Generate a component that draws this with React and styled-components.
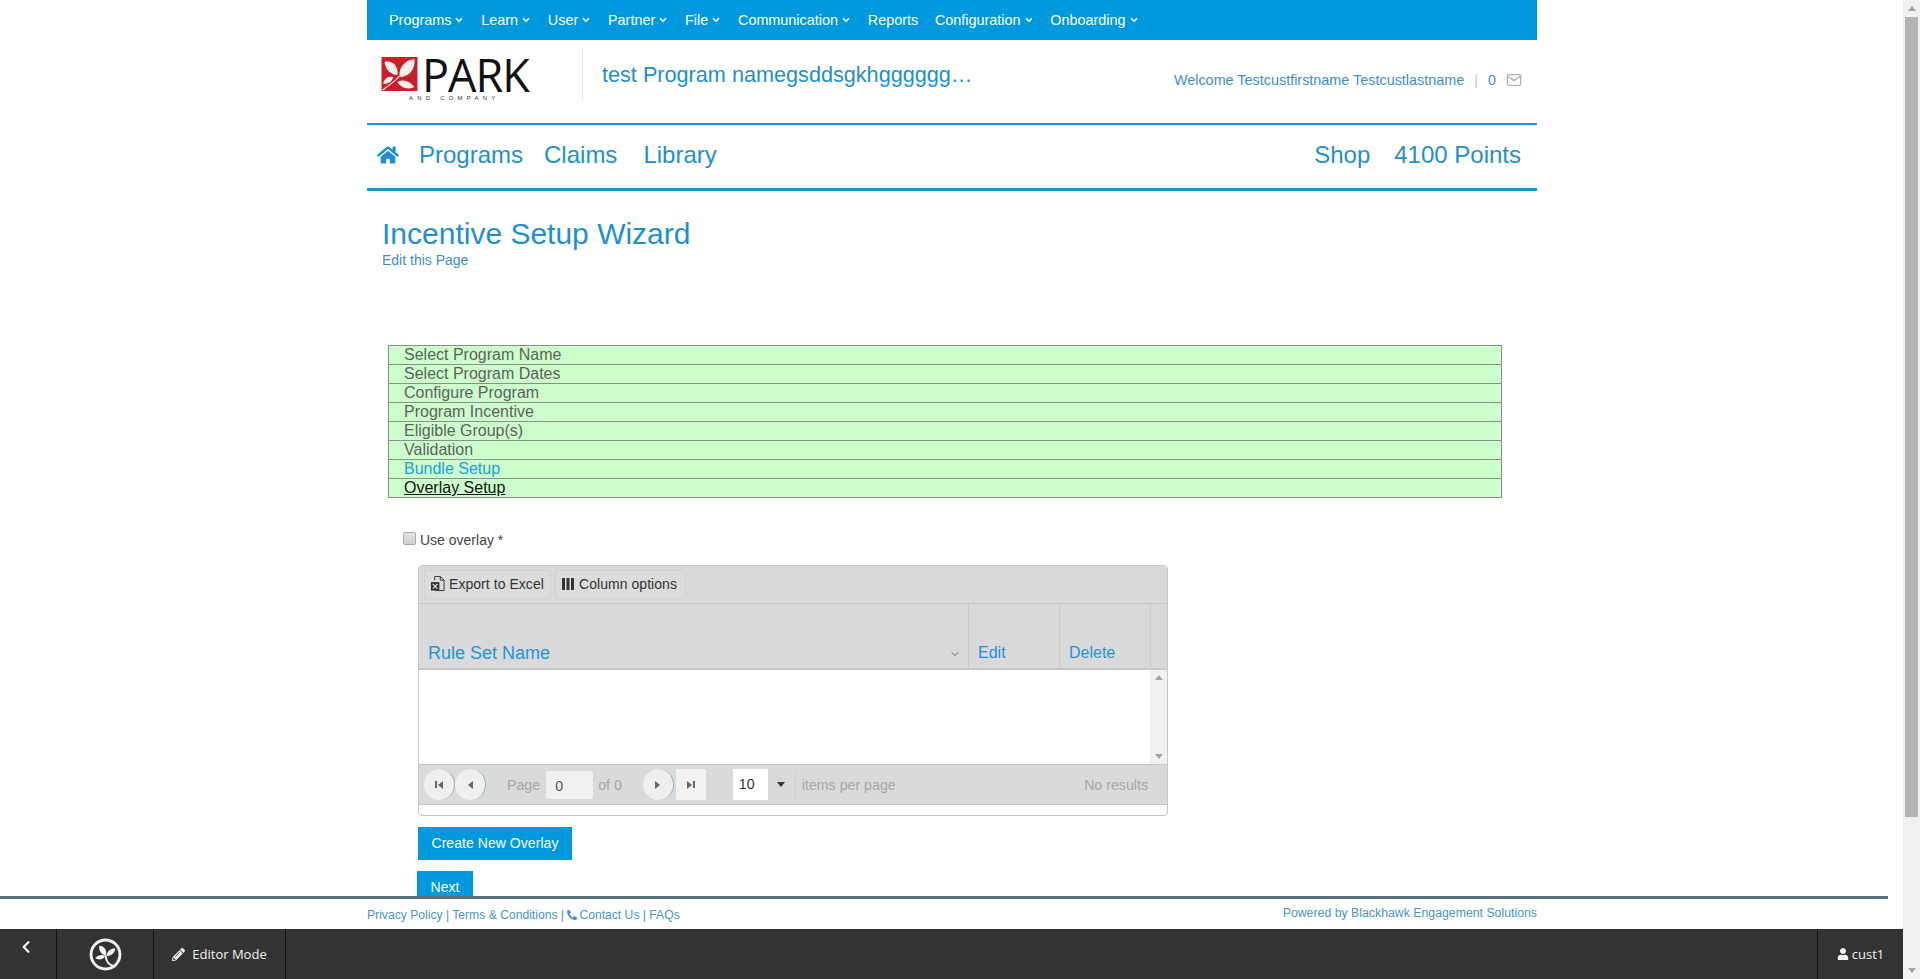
import React from 'react'
import styled, { createGlobalStyle } from 'styled-components'
import { FaHome, FaPencilAlt, FaUser, FaChevronLeft, FaPhone } from 'react-icons/fa'
import { FiMail, FiChevronDown } from 'react-icons/fi'

const BLUE = '#0099de'
const LINK = '#1f8fcf'

const GlobalStyle = createGlobalStyle`
	html, body {
		margin: 0;
		padding: 0;
		height: 100%;
		overflow: hidden;
		background: #fff;
		font-family: "Liberation Sans", Arial, sans-serif;
	}
	* { box-sizing: border-box; }
`

const Page = styled.div`
	width: 1170px;
	margin-left: 367px;
`

const TopNav = styled.nav`
	height: 40px;
	background: ${BLUE};
	display: flex;
	align-items: center;
	padding-left: 22px;
	gap: 16.8px;
	color: #fff;
	font-size: 14.4px;
`

const TopItem = styled.span`
	display: inline-flex;
	align-items: center;
	gap: 3px;
	svg { stroke-width: 4; }
`

const Brand = styled.header`
	height: 85px;
	display: flex;
	border-bottom: 2px solid #1b93d1;
`

const LogoBox = styled.div`
	width: 215px;
	padding: 17px 0 0 14px;
	flex: none;
`

const LogoRow = styled.div`
	display: flex;
	align-items: flex-start;
	gap: 4px;
	height: 35px;
`

const Wordmark = styled.span`
	font-family: "Open Sans", sans-serif;
	font-weight: 400;
	font-size: 45px;
	line-height: 35px;
	letter-spacing: -1px;
	color: #111;
`

const LogoSub = styled.div`
	margin: 3px 0 0 28px;
	font-size: 6px;
	line-height: 7px;
	letter-spacing: 4.2px;
	color: #333;
`

const ProgramTitle = styled.div`
	width: 396px;
	flex: none;
	margin-top: 8px;
	height: 52px;
	border-left: 1px solid #e3e3e3;
	padding: 15px 0 0 19px;
	font-size: 21.65px;
	line-height: 24px;
	color: ${LINK};
	white-space: nowrap;
`

const Welcome = styled.div`
	flex: 1;
	display: flex;
	justify-content: flex-end;
	align-items: center;
	height: 22px;
	margin-top: 29px;
	padding-right: 15px;
	font-size: 14.4px;
	color: #3f8fc7;
`

const Pipe = styled.span`
	margin: 0 10px;
	color: #b9cbd8;
`

const MailIcon = styled(FiMail)`
	margin-left: 10px;
	width: 16px;
	height: 16px;
	color: #b4b4b4;
`

const MainNav = styled.nav`
	height: 66px;
	display: flex;
	align-items: center;
	padding: 0 16px 4px 10px;
	border-bottom: 3px solid #1b93d1;
	font-size: 24px;
	color: ${LINK};
`

const NavLink = styled.span`
	margin-left: ${p => p.$gap}px;
`

const Spacer = styled.div`
	flex: 1;
`

const Heading = styled.div`
	padding: 25px 0 0 15px;
`

const Title = styled.h1`
	margin: 0;
	font-size: 30px;
	font-weight: 400;
	line-height: 36px;
	color: ${LINK};
`

const EditLink = styled.div`
	font-size: 14px;
	line-height: 16px;
	color: #3f8fc7;
`

const Steps = styled.ol`
	list-style: none;
	margin: 77px 0 0 21px;
	padding: 0;
	width: 1114px;
	border: 1px solid #8a8f8a;
`

const Step = styled.li`
	height: 19px;
	background: #ccffcc;
	padding-left: 15px;
	font-size: 16px;
	line-height: 18px;
	color: ${p => p.$link ? '#1ba0d8' : p.$current ? '#111' : '#5f5f5f'};
	text-decoration: ${p => p.$current ? 'underline' : 'none'};
	border-bottom: 1px solid #8a8f8a;
	&:last-child { height: 18px; border-bottom: 0; }
`

const Check = styled.label`
	display: flex;
	align-items: center;
	margin: 34px 0 0 36px;
	height: 16px;
	font-size: 14px;
	color: #444;
`

const CheckBox = styled.span`
	width: 13px;
	height: 13px;
	margin: 0 4px 4px 0;
	border: 1px solid #a9a9a9;
	border-radius: 2px;
	background: linear-gradient(#e4e4e4, #cfcfcf);
`

const Grid = styled.section`
	width: 750px;
	height: 251px;
	margin: 17px 0 0 51px;
	border: 1px solid #c8c8c8;
	border-radius: 4px;
	overflow: hidden;
`

const Toolbar = styled.div`
	height: 38px;
	background: #dadada;
	border-bottom: 1px solid #c8c8c8;
	display: flex;
	align-items: center;
	padding-left: 5px;
	gap: 4px;
`

const ToolButton = styled.span`
	height: 29px;
	width: ${p => p.$w}px;
	padding: 0 0 2px 5px;
	display: inline-flex;
	align-items: center;
	gap: 4px;
	background: #dcdcdc;
	border: 1px solid #d2d2d2;
	border-radius: 3px;
	font-size: 14px;
	letter-spacing: 0.05px;
	color: #333;
`

const HeaderRow = styled.div`
	height: 66px;
	display: grid;
	grid-template-columns: 550px 91px 91px 1fr;
	background: #dadada;
	border-bottom: 2px solid #c8c8c8;
`

const HeaderCell = styled.div`
	display: flex;
	align-items: flex-end;
	justify-content: space-between;
	padding: 0 7px 5px 9px;
	font-size: ${p => p.$size || 16}px;
	line-height: 20px;
	color: #2593d3;
	border-right: 1px solid #cbcbcb;
	svg { color: #666; margin-bottom: 3px; }
`

const Body = styled.div`
	height: 94px;
	display: flex;
	justify-content: flex-end;
	background: #fff;
`

const MiniScroll = styled.div`
	width: 17px;
	background: #f1f1f1;
	display: flex;
	flex-direction: column;
	justify-content: space-between;
	align-items: center;
	padding: 5px 0;
`

const Arrow = styled.span`
	width: 0;
	height: 0;
	border-left: 4px solid transparent;
	border-right: 4px solid transparent;
	border-${p => p.$down ? 'top' : 'bottom'}: 5px solid ${p => p.$color || '#a3a3a3'};
`

const Pager = styled.div`
	height: 41px;
	background: #dadada;
	border-top: 1px solid #c8c8c8;
	border-bottom: 1px solid #c8c8c8;
	display: flex;
	align-items: center;
	padding: 0 19px 0 5px;
	font-size: 14.2px;
	color: #a6a6a6;
`

const RoundButton = styled.span`
	width: 31px;
	height: 31px;
	margin: 0 ${p => p.$mr || 0}px 0 ${p => p.$ml || 0}px;
	flex: none;
	border-radius: 50%;
	background: #efefef;
	border-right: 1px solid #8fb0c8;
	display: flex;
	align-items: center;
	justify-content: center;
	gap: 1px;
`

const SquareButton = styled(RoundButton)`
	width: 30px;
	border-radius: 0;
	border: 0;
	background: #f2f2f2;
`

const TickBar = styled.span`
	width: 2px;
	height: 7px;
	background: #666;
`

const SideArrow = styled.span`
	width: 0;
	height: 0;
	border-top: 4px solid transparent;
	border-bottom: 4px solid transparent;
	border-${p => p.$left ? 'right' : 'left'}: 5px solid #666;
`

const PageInput = styled.span`
	width: 47px;
	height: 28px;
	margin: 0 5px 0 6px;
	flex: none;
	background: #f1f1f1;
	border-radius: 2px;
	color: #555;
	padding-left: 9px;
	line-height: 30px;
`

const SizeSelect = styled.span`
	display: flex;
	width: 63px;
	height: 31px;
	margin: 0 6px 0 27px;
	flex: none;
	border-right: 1px solid #cfcfcf;
`

const SizeValue = styled.span`
	width: 35px;
	background: #fff;
	color: #333;
	padding-left: 6px;
	line-height: 31px;
`

const SizeArrow = styled.span`
	flex: 1;
	display: flex;
	align-items: center;
	justify-content: center;
`

const Primary = styled.button`
	display: block;
	height: ${p => p.$h}px;
	margin: ${p => p.$mt}px 0 0 ${p => p.$ml}px;
	padding: 0 13.5px 1px;
	border: 0;
	background: ${BLUE};
	color: #fff;
	font-family: inherit;
	font-size: 14px;
	letter-spacing: 0.05px;
`

const FixedFooter = styled.footer`
	position: fixed;
	left: 0;
	right: 17px;
	bottom: 0;
	background: #fff;
`

const FooterRule = styled.div`
	height: 3px;
	margin-right: 15px;
	background: #5d6f7b;
`

const FooterLinks = styled.div`
	height: 30px;
	width: 1170px;
	margin-left: 367px;
	display: flex;
	justify-content: space-between;
	font-size: 12.3px;
	color: #4a94c9;
	padding-top: 7px;
	line-height: 14px;
`

const FooterLeft = styled.span`
	padding-top: 2px;
	font-size: 12.15px;
`

const PhoneIcon = styled(FaPhone)`
	width: 10px;
	height: 10px;
	margin-right: 2px;
	transform: scaleX(-1);
	vertical-align: -1px;
`

const DarkBar = styled.div`
	height: 50px;
	background: #333;
	display: flex;
	color: #f2f2f2;
`

const DarkCell = styled.div`
	width: ${p => p.$w}px;
	display: flex;
	align-items: center;
	justify-content: center;
	gap: 7px;
	border-right: 1px solid #111;
	font-family: "Open Sans", sans-serif;
	font-size: 13px;
`

const BackCell = styled(DarkCell)`
	align-items: flex-start;
	padding: 11px 4px 0 0;
`

const UserCell = styled(DarkCell)`
	margin-left: auto;
	border-right: 0;
	border-left: 1px solid #111;
	gap: 3px;
`

const WindowScroll = styled.aside`
	position: fixed;
	top: 0;
	right: 0;
	bottom: 0;
	width: 17px;
	background: #f1f1f1;
	display: flex;
	flex-direction: column;
	align-items: center;
	justify-content: space-between;
	padding: 6px 0;
`

const WindowThumb = styled.span`
	position: absolute;
	top: 17px;
	left: 2px;
	width: 13px;
	height: 800px;
	background: #b4b4b4;
`

const Logo = () => (
	<svg width="37" height="34" viewBox="0 0 36 34">
		<rect width="36" height="34" fill="#c8202b" />
		<g fill="#f7efe9">
			<path d="M3 5C10 3 17 8 16 18 9 18 4 12 3 5z" />
			<path d="M33 2C34 12 28 20 18 20 17 10 24 3 33 2z" />
			<path d="M33 30C28 24 22 22 16 25 19 31 27 33 33 30z" />
			<path d="M2 25C4 20 8 19 12 20 10 25 7 27 2 27z" />
		</g>
		<path d="M1 33C8 28 14 24 18 19" stroke="#f7efe9" strokeWidth="1.2" fill="none" />
	</svg>
)

const ExcelIcon = () => (
	<svg width="15" height="17" viewBox="0 0 16 17">
		<path d="M5 5V1h6l4 4v11H6" fill="none" stroke="#333" />
		<path d="M11 1v4h4" fill="none" stroke="#333" />
		<rect x="1" y="7" width="9" height="9" fill="#333" />
		<path d="M3 9l5 5M8 9l-5 5" stroke="#ddd" strokeWidth="1.3" />
	</svg>
)

const ColumnsIcon = () => (
	<svg width="14" height="12" viewBox="0 0 14 12">
		<path d="M1 0h3v12H1zM5.5 0h3v12h-3zM10 0h3v12h-3z" fill="#333" />
	</svg>
)

const LeafBadge = () => (
	<svg width="33" height="33" viewBox="0 0 32 32">
		<circle cx="16" cy="16" r="14" fill="none" stroke="#f0f0f0" strokeWidth="2.8" />
		<g fill="#f0f0f0">
			<path d="M10 7.5C15 8 18 12 16 17 12 16 9 12 10 7.5z" />
			<path d="M25.5 10C25 15 21 18 16.7 17.3 17.5 13 21 10 25.5 10z" />
			<path d="M6 19.5C9 16 13 16 16 17.3 14 21 9 22 6 19.5z" />
		</g>
		<path d="M16 17C16.5 23 20 27 26 27.5" fill="none" stroke="#f0f0f0" strokeWidth="2" />
	</svg>
)

const menu = ['Programs', 'Learn', 'User', 'Partner', 'File', 'Communication', 'Reports', 'Configuration', 'Onboarding']
const steps = ['Select Program Name', 'Select Program Dates', 'Configure Program', 'Program Incentive', 'Eligible Group(s)', 'Validation']

export default function App() {
	return (
		<>
			<GlobalStyle />
			<Page>
				<TopNav>
					{menu.map(item => (
						<TopItem key={item}>
							{item}
							{item !== 'Reports' && <FiChevronDown size={10} />}
						</TopItem>
					))}
				</TopNav>
				<Brand>
					<LogoBox>
						<LogoRow>
							<Logo />
							<Wordmark>PARK</Wordmark>
						</LogoRow>
						<LogoSub>AND COMPANY</LogoSub>
					</LogoBox>
					<ProgramTitle>test Program namegsddsgkhgggggg…</ProgramTitle>
					<Welcome>
						Welcome Testcustfirstname Testcustlastname
						<Pipe>|</Pipe>
						0
						<MailIcon />
					</Welcome>
				</Brand>
				<MainNav>
					<FaHome size={22} />
					<NavLink $gap={20}>Programs</NavLink>
					<NavLink $gap={21}>Claims</NavLink>
					<NavLink $gap={26}>Library</NavLink>
					<Spacer />
					<NavLink $gap={0}>Shop</NavLink>
					<NavLink $gap={24}>4100 Points</NavLink>
				</MainNav>
				<Heading>
					<Title>Incentive Setup Wizard</Title>
					<EditLink>Edit this Page</EditLink>
				</Heading>
				<Steps>
					{steps.map(s => <Step key={s}>{s}</Step>)}
					<Step $link>Bundle Setup</Step>
					<Step $current>Overlay Setup</Step>
				</Steps>
				<Check>
					<CheckBox />
					Use overlay *
				</Check>
				<Grid>
					<Toolbar>
						<ToolButton $w={127}><ExcelIcon />Export to Excel</ToolButton>
						<ToolButton $w={131}><ColumnsIcon />Column options</ToolButton>
					</Toolbar>
					<HeaderRow>
						<HeaderCell $size={18}>Rule Set Name<FiChevronDown size={12} /></HeaderCell>
						<HeaderCell>Edit</HeaderCell>
						<HeaderCell>Delete</HeaderCell>
					</HeaderRow>
					<Body>
						<MiniScroll>
							<Arrow />
							<Arrow $down />
						</MiniScroll>
					</Body>
					<Pager>
						<RoundButton><TickBar /><SideArrow $left /></RoundButton>
						<RoundButton $mr={21}><SideArrow $left /></RoundButton>
						Page
						<PageInput>0</PageInput>
						of 0
						<RoundButton $ml={21}><SideArrow /></RoundButton>
						<SquareButton $ml={2}><SideArrow /><TickBar /></SquareButton>
						<SizeSelect>
							<SizeValue>10</SizeValue>
							<SizeArrow><Arrow $down $color="#333" /></SizeArrow>
						</SizeSelect>
						items per page
						<Spacer />
						No results
					</Pager>
				</Grid>
				<Primary $h={33} $mt={11} $ml={51}>Create New Overlay</Primary>
				<Primary $h={33} $mt={11} $ml={50}>Next</Primary>
			</Page>
			<FixedFooter>
				<FooterRule />
				<FooterLinks>
					<FooterLeft>Privacy Policy | Terms &amp; Conditions | <PhoneIcon />Contact Us | FAQs</FooterLeft>
					<span>Powered by Blackhawk Engagement Solutions</span>
				</FooterLinks>
				<DarkBar>
					<BackCell $w={57}><FaChevronLeft size={14} /></BackCell>
					<DarkCell $w={97}><LeafBadge /></DarkCell>
					<DarkCell $w={132}><FaPencilAlt size={13} />Editor Mode</DarkCell>
					<UserCell $w={86}><FaUser size={12} />cust1</UserCell>
				</DarkBar>
			</FixedFooter>
			<WindowScroll>
				<Arrow />
				<WindowThumb />
				<Arrow $down />
			</WindowScroll>
		</>
	)
}
